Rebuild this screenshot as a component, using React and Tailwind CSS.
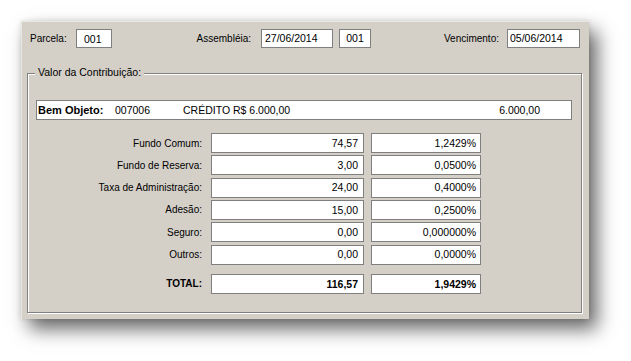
const fieldBase = 'h-[19px] border border-[#7f7f7f] bg-white flex items-center text-[10.5px] leading-none'

function Field({ className, children }) {
  return <div className={fieldBase + ' ' + className}>{children}</div>
}

const rows = [
  { label: 'Fundo Comum:', value: '74,57', pct: '1,2429%' },
  { label: 'Fundo de Reserva:', value: '3,00', pct: '0,0500%' },
  { label: 'Taxa de Administração:', value: '24,00', pct: '0,4000%' },
  { label: 'Adesão:', value: '15,00', pct: '0,2500%' },
  { label: 'Seguro:', value: '0,00', pct: '0,000000%' },
  { label: 'Outros:', value: '0,00', pct: '0,0000%' },
]

function ValueRow({ label, value, pct, bold }) {
  return (
    <div className="flex items-center h-[20px]">
      <span className={'w-[174px] text-right text-[10px] ' + (bold ? 'font-bold' : '')}>{label}</span>
      <div className={'ml-[9px] w-[153px] h-[20px] border border-[#7f7f7f] bg-white flex items-center justify-end pr-[5px] text-[10.5px] leading-none ' + (bold ? 'font-bold' : '')}>
        {value}
      </div>
      <div className={'ml-[7px] w-[110px] h-[20px] border border-[#7f7f7f] bg-white flex items-center justify-end pr-[4px] text-[10.5px] leading-none ' + (bold ? 'font-bold' : '')}>
        {pct}
      </div>
    </div>
  )
}

export default function App() {
  return (
    <div className="min-h-screen bg-white pl-[21px] pt-[21px] font-['Liberation_Sans',Arial,sans-serif] text-black">
      <div className="w-[568px] h-[298px] bg-[#d4d0c8] pt-[8px] shadow-[inset_1px_1px_0_#e9e7e2,8px_10px_18px_rgba(0,0,0,0.6),0_0_5px_rgba(0,0,0,0.12)]">
        {/* cabeçalho */}
        <div className="flex items-center h-[19px] text-[10px]">
          <span className="ml-[9px] w-[46px]">Parcela:</span>
          <Field className="w-[36px] pl-[7px] pt-[2px]">001</Field>
          <span className="w-[149px] text-right pr-[10px]">Assembléia:</span>
          <Field className="w-[72px] pl-[3px]">27/06/2014</Field>
          <Field className="ml-[6px] w-[32px] justify-center">001</Field>
          <span className="w-[136px] text-right pr-[8px]">Vencimento:</span>
          <Field className="w-[73px] pl-[2px]">05/06/2014</Field>
        </div>

        {/* grupo */}
        <div className="relative mt-[25px] ml-[6px] w-[555px] h-[240px] border border-[#808080] shadow-[inset_1px_1px_0_#ffffff,1px_1px_0_#ffffff]">
          <span className="absolute left-[7px] top-[-8px] px-[3px] bg-[#d4d0c8] text-[10.5px] leading-[13px]">
            Valor da Contribuição:
          </span>

          <div className="mt-[26px] ml-[8px] w-[536px] h-[20px] border border-[#7f7f7f] bg-white flex items-center text-[10.5px] leading-none">
            <span className="w-[78px] pl-[1px] font-bold text-[11px]">Bem Objeto:</span>
            <span className="w-[68px]">007006</span>
            <span className="flex-1">CRÉDITO R$ 6.000,00</span>
            <span className="pr-[31px]">6.000,00</span>
          </div>

          <div className="mt-[13px] flex flex-col gap-[2.33px]">
            {rows.map((r) => (
              <ValueRow key={r.label} {...r} />
            ))}
          </div>

          <div className="mt-[9.33px]">
            <ValueRow label="TOTAL:" value="116,57" pct="1,9429%" bold />
          </div>
        </div>
      </div>
    </div>
  )
}
